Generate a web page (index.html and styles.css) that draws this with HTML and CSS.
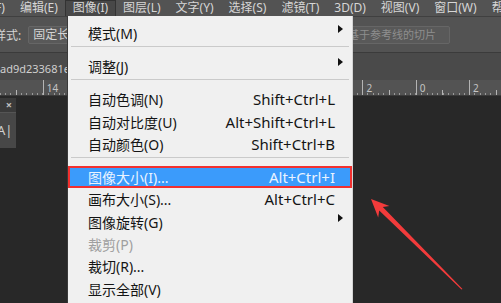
FILE: index.html
```html
<!DOCTYPE html>
<html lang="zh-CN">
<head>
    <meta charset="UTF-8">
    <meta name="viewport" content="width=device-width, initial-scale=1.0">
    <title>图像菜单</title>
    <link rel="stylesheet" href="styles.css">
</head>
<body>
    <div class="app">
        <div class="menubar">
            <span class="menubar-item first">文件(F)</span>
            <span class="menubar-item">编辑(E)</span>
            <span class="menubar-item active">图像(I)</span>
            <span class="menubar-item">图层(L)</span>
            <span class="menubar-item">文字(Y)</span>
            <span class="menubar-item">选择(S)</span>
            <span class="menubar-item">滤镜(T)</span>
            <span class="menubar-item">3D(D)</span>
            <span class="menubar-item">视图(V)</span>
            <span class="menubar-item">窗口(W)</span>
            <span class="menubar-item">帮助(H)</span>
        </div>

        <div class="options">
            <span class="options-label">样式:</span>
            <span class="field">固定长度</span>
            <span class="field field-right">基于参考线的切片</span>
        </div>

        <div class="tabs">
            <span class="tab">ad9d233681e8a2c1.jpg @ 100%(RGB/8)</span>
        </div>

        <div class="ruler">
            <span class="ruler-seg">6</span>
            <span class="ruler-seg">14</span>
            <span class="ruler-seg">12</span>
            <span class="ruler-seg">10</span>
            <span class="ruler-seg">8</span>
            <span class="ruler-seg">6</span>
            <span class="ruler-seg">4</span>
            <span class="ruler-seg">2</span>
            <span class="ruler-seg">0</span>
            <span class="ruler-seg">2</span>
        </div>

        <div class="workspace">
            <div class="panel">
                <div class="panel-head">×</div>
                <div class="panel-body">A|</div>
            </div>
        </div>

        <div class="dropdown">
            <div class="item"><span class="label">模式(M)</span><span class="sub"></span></div>
            <div class="sep"></div>
            <div class="item"><span class="label">调整(J)</span><span class="sub"></span></div>
            <div class="sep"></div>
            <div class="item"><span class="label">自动色调(N)</span><span class="key">Shift+Ctrl+L</span></div>
            <div class="item"><span class="label">自动对比度(U)</span><span class="key">Alt+Shift+Ctrl+L</span></div>
            <div class="item"><span class="label">自动颜色(O)</span><span class="key">Shift+Ctrl+B</span></div>
            <div class="sep"></div>
            <div class="item selected"><span class="label">图像大小(I)...</span><span class="key">Alt+Ctrl+I</span></div>
            <div class="item"><span class="label">画布大小(S)...</span><span class="key">Alt+Ctrl+C</span></div>
            <div class="item"><span class="label">图像旋转(G)</span><span class="sub"></span></div>
            <div class="item disabled"><span class="label">裁剪(P)</span></div>
            <div class="item"><span class="label">裁切(R)...</span></div>
            <div class="item"><span class="label">显示全部(V)</span></div>
        </div>

        <svg class="pointer" width="501" height="303" viewBox="0 0 501 303">
            <polygon points="371,199 389.4,206 382.8,207 462.5,289 461.5,289.6 379.2,210.6 378.2,217.4" fill="#f23b3b"/>
        </svg>
    </div>
</body>
</html>
```

FILE: styles.css
```css
body {
    margin: 0;
    background: #282828;
    font-family: 'Noto Sans', 'Noto Sans CJK SC', sans-serif;
}
.app {
    position: relative;
    width: 501px;
    height: 303px;
    overflow: hidden;
    display: flex;
    flex-direction: column;
}
.menubar {
    display: flex;
    height: 16px;
    background: #535353;
    font-size: 12px;
    line-height: 16px;
    color: #d6d6d6;
    white-space: nowrap;
}
.menubar-item {
    padding: 0 7.5px;
}
.menubar-item.first {
    margin-left: -40px;
}
.menubar-item.active {
    background: #484848;
    box-shadow: inset 1px 0 #333, inset -1px 0 #333, inset 0 1px #333;
}
.options {
    display: flex;
    align-items: center;
    height: 35px;
    background: #535353;
    border-top: 1px solid #404040;
    font-size: 12px;
    color: #d4d4d4;
    white-space: nowrap;
}
.options-label {
    margin-left: -6px;
}
.field {
    margin-left: 7px;
    height: 16px;
    line-height: 16px;
    padding: 0 4px;
    width: 80px;
    background: #595959;
    border: 1px solid #666;
    border-radius: 2px;
}
.field-right {
    margin-left: auto;
    margin-right: 51px;
    width: 133px;
    text-align: right;
    padding-right: 13px;
    font-size: 11px;
    color: #8e8e8e;
}
.tabs {
    display: flex;
    align-items: center;
    height: 27px;
    background: #4a4a4a;
    border-top: 1px solid #3b3b3b;
    font-size: 11px;
    color: #cfcfcf;
    white-space: nowrap;
}
.tab {
    padding: 4px 0 0 0;
}
.ruler {
    display: flex;
    height: 15px;
    background-color: #535353;
    border-bottom: 1px solid #3a3a3a;
    margin-left: -10.6px;
}
.ruler-seg {
    flex: none;
    border-left: 1px solid #b4b4b4;
    padding-left: 3px;
    box-sizing: border-box;
    width: 53.3px;
    font-size: 10px;
    line-height: 16px;
    color: #c4c4c4;
    background-image:
        linear-gradient(#b4b4b4, #b4b4b4),
        repeating-linear-gradient(90deg, transparent 0, transparent 4.33px, #9a9a9a 4.33px, #9a9a9a 5.33px);
    background-size: 1px 5px, 100% 2px;
    background-position: 25.6px 100%, 0 100%;
    background-repeat: no-repeat, no-repeat;
}
.workspace {
    flex: 1;
    background: #282828;
    padding-top: 2px;
}
.panel {
    width: 16px;
    height: 50px;
    background: #474747;
    font-size: 12px;
    color: #d0d0d0;
    overflow: hidden;
}
.panel-head {
    height: 14px;
    line-height: 13px;
    background: #3a3a3a;
    border-bottom: 1px solid #555;
    text-align: right;
    padding-right: 4px;
    font-size: 11px;
    font-weight: bold;
    color: #bdbdbd;
}
.panel-body {
    margin-top: 8px;
    margin-left: -3px;
    font-size: 13px;
}
.dropdown {
    position: absolute;
    left: 67px;
    top: 16px;
    width: 284px;
    height: 300px;
    padding-top: 6px;
    background: #f0f0f0;
    border-left: 1px solid #3a3a3a;
    border-right: 1px solid #d4d4d4;
    font-size: 14px;
    color: #141414;
}
.item {
    display: flex;
    align-items: center;
    height: 22.4px;
    padding: 0 17px 0 20px;
    white-space: nowrap;
}
.label {
    flex: 1;
}
.key {
    font-size: 15px;
}
.sub {
    width: 0;
    height: 0;
    border-left: 5px solid #111;
    border-top: 4px solid transparent;
    border-bottom: 4px solid transparent;
    margin-right: -8px;
    margin-bottom: 8px;
}
.sep {
    height: 0;
    margin: 1.6px 3px 8px;
    border-top: 1px solid #cacaca;
}
.selected {
    background: #3b9bfb;
    color: #eaf3ff;
    outline: 2px solid #f2302f;
    outline-offset: -2px;
}
.disabled {
    color: #9f9f9f;
}
.pointer {
    position: absolute;
    left: 0;
    top: 0;
}
```
